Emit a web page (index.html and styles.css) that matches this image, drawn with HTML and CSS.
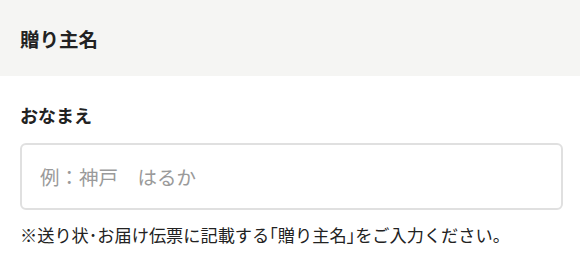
FILE: index.html
```html
<!DOCTYPE html>
<html lang="ja">
<head>
  <meta charset="UTF-8">
  <title>贈り主名</title>
  <link rel="stylesheet" href="styles.css">
</head>
<body>

  <!-- Section header -->
  <div class="section-head">
    <h2 class="section-head__title">贈り主名</h2>
  </div>

  <!-- Sender name -->
  <div class="field">
    <label class="field__label" for="sender-name">おなまえ</label>
    <input class="field__input" type="text" id="sender-name" placeholder="例：神戸　はるか">
    <p class="field__note">※送り状･お届け伝票に記載する｢贈り主名｣をご入力ください。</p>
  </div>

</body>
</html>
```

FILE: styles.css
```css
body {
  margin: 0;
  font-family: "Noto Sans CJK JP", sans-serif;
  color: #222;
  background: #fff;
}

.section-head {
  background: #f5f5f3;
  height: 76px;
  padding: 0 20px;
  display: flex;
  align-items: center;
}

.section-head__title {
  margin: 0;
  font-size: 19.5px;
  font-weight: bold;
}

.field {
  padding: 25px 17px 0 20px;
}

.field__label {
  display: block;
  font-size: 18px;
  font-weight: bold;
  line-height: 28px;
}

.field__input {
  display: block;
  box-sizing: border-box;
  width: 100%;
  height: 67px;
  margin-top: 14px;
  padding: 0 18px;
  border: 2px solid #e0e0e0;
  border-radius: 6px;
  font-family: inherit;
  font-size: 19.5px;
  color: #222;
  outline: none;
}

.field__input::placeholder {
  color: #9a9a9a;
}

.field__note {
  margin: 12px 0 0;
  font-size: 17.2px;
  line-height: 26px;
  color: #222;
}
```
